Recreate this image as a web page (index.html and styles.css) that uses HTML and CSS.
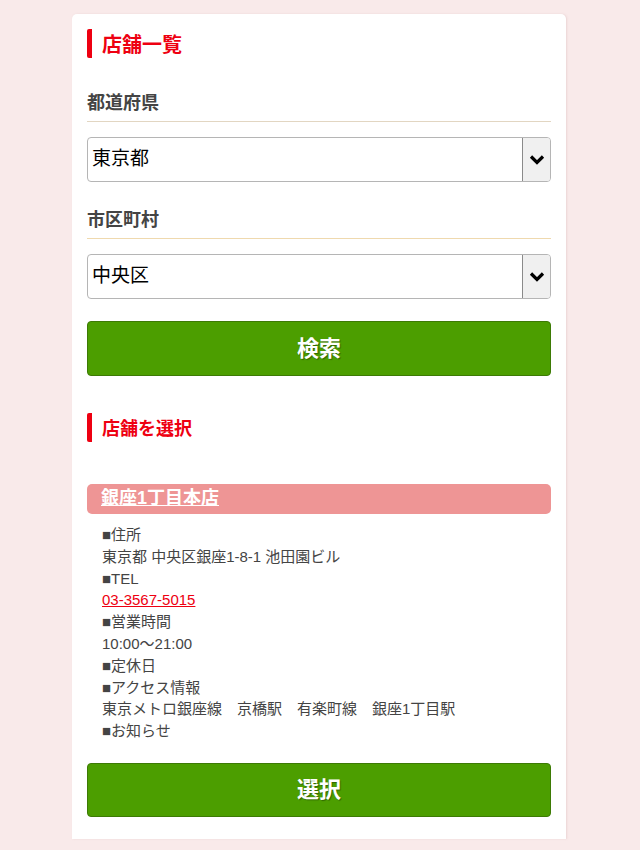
FILE: index.html
```html
<!DOCTYPE html>
<html lang="ja">
<head>
  <meta charset="UTF-8">
  <title>店舗一覧</title>
  <link rel="stylesheet" href="styles.css">
</head>
<body>

  <div class="card">
    <h2 class="heading">店舗一覧</h2>

    <div class="field">
      <h3 class="label">都道府県</h3>
      <div class="select">
        <span class="select-value">東京都</span>
        <span class="select-arrow">
          <svg width="16" height="11" viewBox="0 0 16 11"><path d="M2 2.5 L8 8.5 L14 2.5" stroke="#000" stroke-width="3.2" fill="none"/></svg>
        </span>
      </div>
    </div>

    <div class="field">
      <h3 class="label label-warm">市区町村</h3>
      <div class="select">
        <span class="select-value">中央区</span>
        <span class="select-arrow">
          <svg width="16" height="11" viewBox="0 0 16 11"><path d="M2 2.5 L8 8.5 L14 2.5" stroke="#000" stroke-width="3.2" fill="none"/></svg>
        </span>
      </div>
    </div>

    <button class="btn">検索</button>

    <h2 class="heading heading-small">店舗を選択</h2>

    <div class="shop">
      <div class="shop-name"><a href="#">銀座1丁目本店</a></div>
      <ul class="shop-info">
        <li>■住所</li>
        <li>東京都 中央区銀座1-8-1 池田園ビル</li>
        <li>■TEL</li>
        <li><a class="tel" href="#">03-3567-5015</a></li>
        <li>■営業時間</li>
        <li>10:00～21:00</li>
        <li>■定休日</li>
        <li>■アクセス情報</li>
        <li>東京メトロ銀座線　京橋駅　有楽町線　銀座1丁目駅</li>
        <li>■お知らせ</li>
      </ul>
      <button class="btn btn-select">選択</button>
    </div>
  </div>

</body>
</html>
```

FILE: styles.css
```css
body {
  margin: 0;
  padding: 14px 0 12px;
  background: #f9eaea;
  font-family: "Liberation Sans", "Noto Sans CJK JP", sans-serif;
  color: #444;
}

.card {
  width: 464px;
  margin: 0 0 0 72px;
  padding: 15px 15px 22px;
  background: #fff;
  border-radius: 5px 5px 0 0;
  box-shadow: 1px 0 2px rgba(200, 150, 150, 0.25);
}

.heading {
  margin: 0;
  padding: 3px 0 0 10px;
  border-left: 5px solid #ee0011;
  border-radius: 2px;
  color: #ee0011;
  font-size: 20px;
  line-height: 26px;
  font-weight: bold;
}

.heading-small {
  font-size: 18px;
  margin-top: 37px;
}

.field {
  margin-top: 33px;
}

.field + .field {
  margin-top: 26px;
}

.label {
  margin: 0;
  padding-bottom: 6px;
  border-bottom: 1px solid #e2d6c2;
  font-size: 18px;
  line-height: 24px;
  font-weight: bold;
  color: #444;
}

.label-warm {
  border-bottom-color: #efd9ae;
}

.select {
  display: flex;
  margin-top: 15px;
  height: 43px;
  border: 1px solid #b5b5b5;
  border-radius: 4px;
  overflow: hidden;
}

.select-value {
  flex: 1;
  padding-left: 4px;
  font-size: 19px;
  line-height: 41px;
  color: #000;
  font-weight: normal;
}

.select-arrow {
  width: 27px;
  display: flex;
  align-items: center;
  justify-content: center;
  background: #f0f0f0;
  border-left: 1px solid #8a8a8a;
}

.btn {
  display: block;
  width: 100%;
  margin-top: 22px;
  height: 55px;
  padding: 0 0 6px;
  background: #4c9e00;
  border: 1px solid #3d7a05;
  border-radius: 4px;
  color: #fff;
  font-family: inherit;
  font-size: 22px;
  font-weight: bold;
  text-shadow: 1px 1px 1px rgba(0, 0, 0, 0.35);
}

.shop {
  margin-top: 42px;
}

.shop-name {
  background: #ee9595;
  border-radius: 5px;
  padding: 0 14px;
  height: 30px;
  line-height: 28px;
  font-size: 18px;
  font-weight: bold;
}

.shop-name a {
  color: #fff;
}

.shop-info {
  list-style: none;
  margin: 10px 0 0;
  padding: 0 15px;
  font-size: 15px;
  line-height: 21.8px;
  color: #444;
}

.tel {
  color: #ee0011;
}

.btn-select {
  margin-top: 21px;
  height: 54px;
}
```
